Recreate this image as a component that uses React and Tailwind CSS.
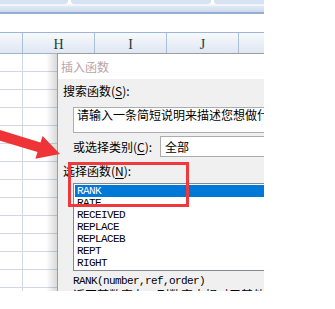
const CJK = { fontFamily: '"Noto Sans CJK SC", "Noto Sans", sans-serif' };
const MONO = { fontFamily: '"Liberation Mono", "DejaVu Sans Mono", monospace' };
const SERIF = { fontFamily: '"Liberation Serif", "DejaVu Serif", serif' };

function GridRow({ header }) {
  const cols = [
    { w: 'w-[23px]', l: '' },
    { w: 'w-[72px]', l: 'H' },
    { w: 'w-[72px]', l: 'I' },
    { w: 'w-[72px]', l: 'J' },
    { w: 'w-[40px]', l: '' },
  ];
  if (header) {
    return (
      <div className="flex h-[21px] border-b border-[#9fb5cf] bg-gradient-to-b from-[#f7f9fc] to-[#dfe7f2]">
        {cols.map((c, i) => (
          <div
            key={i}
            className={`${c.w} shrink-0 border-r border-[#a9bfd8] flex items-end justify-center pb-[1px] text-[14px] leading-[14px] text-[#203b3b]`}
            style={SERIF}
          >
            {c.l}
          </div>
        ))}
      </div>
    );
  }
  return (
    <div className="flex h-[18px]">
      {cols.map((c, i) => (
        <div key={i} className={`${c.w} shrink-0 border-r border-b border-[#d0d7e5] bg-white`} />
      ))}
    </div>
  );
}

function U({ children }) {
  return <span className="underline underline-offset-2">{children}</span>;
}

export default function App() {
  const rows = Array.from({ length: 14 });
  const funcs = ['RANK', 'RATE', 'RECEIVED', 'REPLACE', 'REPLACEB', 'REPT', 'RIGHT'];
  return (
    <div className="w-[335px] h-[309px] bg-white">
      <div className="relative w-[264px] h-[291px] overflow-hidden bg-white">
        {/* top toolbar remnants */}
        <div className="flex h-[4px] gap-[3px] bg-white">
          <div className="w-[68px] bg-[#d7e3f2] rounded-br-[3px]" />
          <div className="w-[140px] bg-[#d7e3f2] rounded-b-[3px]" />
          <div className="flex-1 bg-[#d7e3f2] rounded-bl-[3px]" />
        </div>
        <div className="h-[2px] bg-[#f2f6fb]" />
        <div className="h-[6px] bg-gradient-to-b from-[#e2eaf5] to-[#cbd9ec]" />
        <div className="h-[2px] bg-[#93aed0]" />
        <div className="h-[18px] bg-white" />
        <div className="h-[1px] bg-[#9cb5d4]" />
        <GridRow header />
        {rows.map((_, i) => (
          <GridRow key={i} />
        ))}

        {/* dialog shadow */}
        <div className="absolute left-[46px] top-[54px] w-[11px] h-[240px] bg-gradient-to-r from-transparent to-black/15" />

        {/* dialog */}
        <div className="absolute left-[57px] top-[53px] w-[230px] h-[260px] border border-[#9d9d9d] bg-[#f0f0f0]" style={CJK}>
          <div className="h-[25px] bg-white flex items-center pl-[3px] text-[12px] text-[#bba3a8]">
            插入函数
          </div>
          <div className="pl-[5px] pt-[4px] text-[12px] text-black">
            <div className="h-[16px] leading-[16px]">
              搜索函数(<U>S</U>):
            </div>
            <div className="ml-[10px] mt-[8px] h-[26px] border border-[#abadb3] bg-white pl-[3px] leading-[13px] whitespace-nowrap overflow-hidden">
              请输入一条简短说明来描述您想做什么，然后单击“转到”
            </div>
            <div className="ml-[10px] mt-[3px] flex items-center h-[21px]">
              <span className="w-[87px] shrink-0">
                或选择类别(<U>C</U>):
              </span>
              <div className="flex-1 h-[21px] border border-[#acacac] bg-white flex items-center pl-[4px]">全部</div>
            </div>
            <div className="mt-[6px] h-[16px] leading-[16px]">
              选择函数(<U>N</U>):
            </div>
            <div className="ml-[10px] mt-[4px] h-[88px] border-t border-l border-b border-[#828790] bg-white pl-[1px] pt-[1px]">
              {funcs.map((f, i) => (
                <div
                  key={f}
                  className={`h-[12px] leading-[12px] pl-[2px] text-[11px] tracking-[-0.6px] ${
                    i === 0 ? 'bg-[#0078d7] text-white' : 'text-black'
                  }`}
                  style={MONO}
                >
                  {f}
                </div>
              ))}
            </div>
            <div className="ml-[10px] mt-[3px] h-[14px] leading-[14px] text-[11px] tracking-[-0.6px]" style={MONO}>
              RANK(number,ref,order)
            </div>
            <div className="ml-[10px] h-[14px] leading-[14px] whitespace-nowrap">
              返回某数字在一列数字中相对于其他数值的大小排名
            </div>
          </div>
        </div>

        {/* red annotation rectangle */}
        <div className="absolute left-[68px] top-[162px] w-[121px] h-[45px] border-[3px] border-[#ee3a3c]" />

        {/* red arrow */}
        <svg className="absolute left-0 top-0" width="264" height="291" viewBox="0 0 264 291">
          <polygon
            points="-10,127 40.5,142.5 42.6,135.9 60,154 35.4,158.7 37.5,152.1 -13,136.7"
            fill="#ee3437"
          />
        </svg>
      </div>
    </div>
  );
}
